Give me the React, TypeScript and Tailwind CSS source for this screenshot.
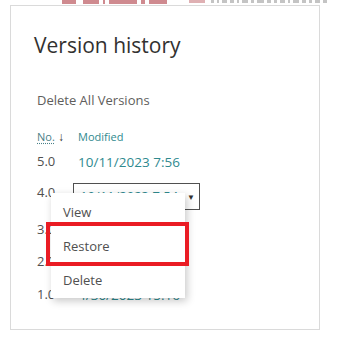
// Version history panel with a row context menu open
const font = { fontFamily: '"Open Sans", "Noto Sans", sans-serif' };

const rows = [
  { no: '3.0', date: '6/02/2023 11:20', h: 'h-[32px]' },
  { no: '2.0', date: '5/14/2023 9:02', h: 'h-[32px]' },
  { no: '1.0', date: '4/30/2023 15:16', h: 'h-[34px]' },
];

function BackgroundStrip() {
  return (
    <div className="h-[5px] flex items-start overflow-hidden">
      <div className="w-[62px]" />
      <div className="h-[4px] w-[14px] bg-[#cf8a8f]" />
      <div className="w-[7px]" />
      <div className="h-[4px] w-[16px] bg-[#cf8a8f]" />
      <div className="w-[4px]" />
      <div className="h-[4px] w-[2px] bg-[#cf8a8f]" />
      <div className="w-[4px]" />
      <div className="h-[4px] w-[28px] bg-[#cf8a8f]" />
      <div className="w-[4px]" />
      <div className="h-[4px] w-[4px] bg-[#cf8a8f]" />
      <div className="w-[4px]" />
      <div className="h-[4px] w-[18px] bg-[#cf8a8f]" />
      <div className="w-[22px]" />
      <div className="h-[3px] w-[16px] bg-[#dfb0b3]" />
      <div className="w-[6px]" />
      <div className="flex gap-[3px] items-start">
        {[3, 2, 5, 4, 2, 6, 3, 7, 4, 3, 5, 2, 6, 4, 3, 5, 4].map((w, i) => (
          <div key={i} className="h-[3px] bg-[#c4c4c4]" style={{ width: w }} />
        ))}
      </div>
    </div>
  );
}

export default function App() {
  return (
    <div className="relative w-[340px] h-[340px] bg-white overflow-hidden" style={font}>
      <BackgroundStrip />

      <div className="ml-[10px] w-[310px] h-[325px] border border-[#dadada] bg-white pl-[23px]">
        <h1 className="mt-[25px] text-[21px] leading-[28px] text-[#323130]">Version history</h1>

        <div className="mt-[31px] text-[13px] leading-[20px] text-[#605e5c] pl-[3px]">Delete All Versions</div>

        <div className="mt-[19px] pl-[3px] flex items-center h-[16px] text-[11px] leading-[16px]">
          <span className="w-[18px] text-[#4b8087] underline decoration-dotted underline-offset-2">No.</span>
          <span className="ml-[3px] w-[20px] text-[#323130] text-[12px] font-bold">↓</span>
          <span className="text-[#2f8a8f]">Modified</span>
        </div>

        <div className="mt-[3px] pl-[3px] text-[13px] text-[#505050]">
          <div className="flex items-center h-[28px]">
            <span className="w-[41px]">5.0</span>
            <span className="text-[#2f8a8f] text-[13.5px]">10/11/2023 7:56</span>
          </div>

          <div className="flex items-start h-[38px]">
            <span className="w-[36px] mt-[6px] leading-[20px]">4.0</span>
            <div className="mt-[7px] w-[127px] h-[27px] border border-[#505050] flex items-center justify-between pl-[6px] pr-[4px]">
              <span className="text-[#2f8a8f] text-[13px]">10/11/2023 7:54</span>
              <span className="text-[8px] text-[#323130]">▼</span>
            </div>
          </div>

          {rows.map((r) => (
            <div key={r.no} className={`flex items-center ${r.h}`}>
              <span className="w-[41px]">{r.no}</span>
              <span className="text-[#2f8a8f] text-[13.5px]">{r.date}</span>
            </div>
          ))}
        </div>
      </div>

      {/* context menu */}
      <div className="absolute left-[51px] top-[193px] w-[134px] pt-[3px] bg-white shadow-[2px_3px_8px_rgba(0,0,0,0.22)] text-[13px] text-[#505050]">
        {['View', 'Restore', 'Delete'].map((item) => (
          <div key={item} className="h-[34px] flex items-center pl-[12px]">
            {item}
          </div>
        ))}
      </div>

      {/* highlight */}
      <div className="absolute left-[46px] top-[222px] w-[143px] h-[44px] border-4 border-[#ea1c24]" />
    </div>
  );
}
